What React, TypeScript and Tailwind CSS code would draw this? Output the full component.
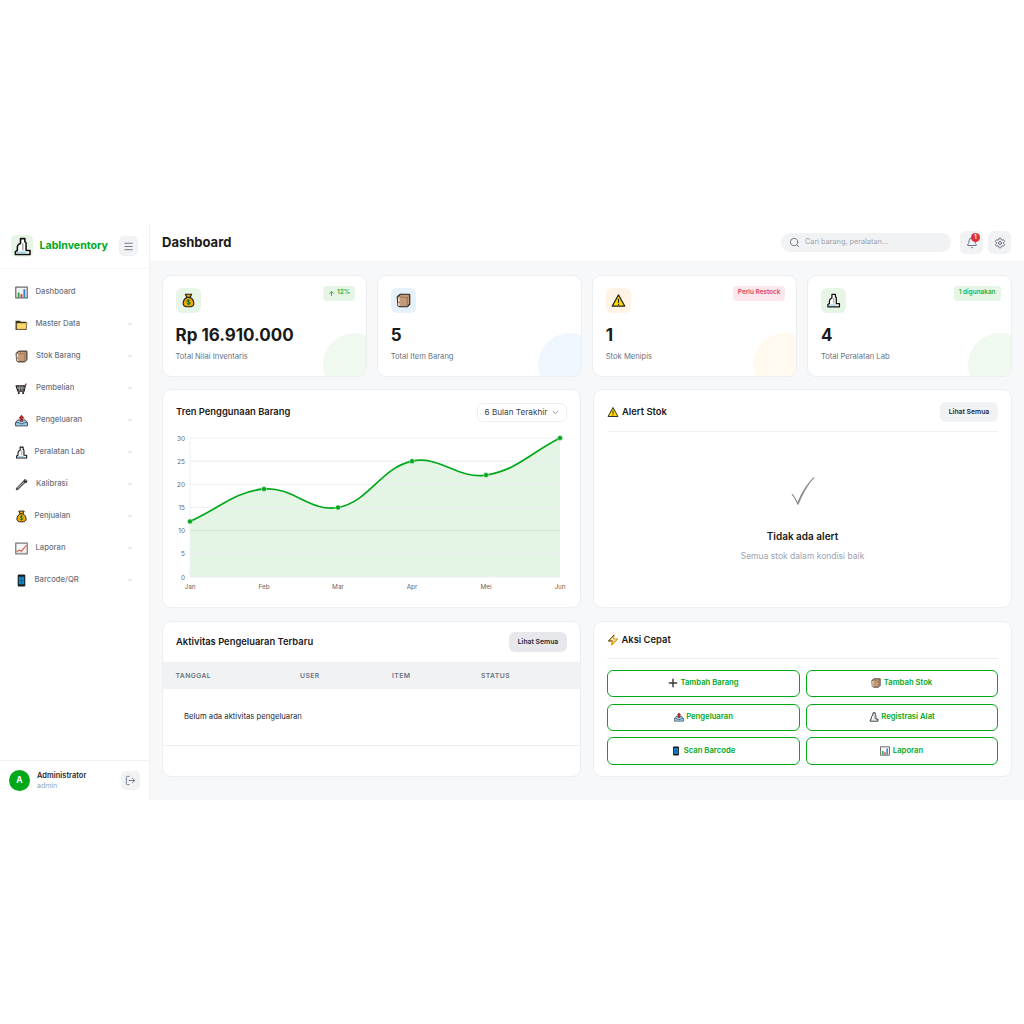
import React from "react";
import { Menu, ChevronDown, Search, Bell, Settings, LogOut, ArrowUp } from "lucide-react";

type IP = { s?: number };
const Svg = ({ s = 13, children }: { s?: number; children: React.ReactNode }) => (
  <svg width={s} height={s} viewBox="0 0 24 24" className="shrink-0">{children}</svg>
);
const Micro = ({ s }: IP) => (
  <Svg s={s}>
    <path d="M9.500 2h5.500v4l1.500 1.500V17H21.500v5H3v-3.500l2.500-1.500v-4c0-1.500 .5-2.500 1.500-3.500L9.500 8z" fill="#fff" stroke="#111" strokeWidth="2" strokeLinejoin="round" />
    <path d="M5 18.500h11v2H5z" fill="#8fd0e8" />
    <path d="M12.500 8v9" stroke="#555" strokeWidth="1" />
  </Svg>
);
const Bag = ({ s }: IP) => (
  <Svg s={s}>
    <path d="M7 2h10l-2.500 5c4 2 6 6 6 10 0 3-3 5-8.500 5S3.500 20 3.500 17c0-4 2-8 6-10z" fill="#f5a800" stroke="#222" strokeWidth="1.800" strokeLinejoin="round" />
    <path d="M9 7h6" stroke="#222" strokeWidth="1.800" />
    <path d="M14.500 12c-1-1.200-5-1.200-5 .8 0 2.400 5 1 5 3.400 0 2-4 2-5.200.6M12 9.500v10" fill="none" stroke="#0f7a2c" strokeWidth="1.700" />
  </Svg>
);
const Box = ({ s }: IP) => (
  <Svg s={s}>
    <path d="M2 6l5-4h15v16l-4 4H6l-3-2z" fill="#c49a78" stroke="#222" strokeWidth="1.800" strokeLinejoin="round" />
    <path d="M2.500 6l15.500 1.500V22" fill="none" stroke="#8b6a4c" strokeWidth="1.200" />
    <path d="M18 7.500L22 2" stroke="#8b6a4c" strokeWidth="1.200" />
    <path d="M3 7h3v14l-3-1z" fill="#ead8c4" />
    <circle cx="5" cy="15" r="1.300" fill="#e5484d" />
  </Svg>
);
const Warn = ({ s }: IP) => (
  <Svg s={s}>
    <path d="M12 3l10 18H2z" fill="#ffd800" stroke="#222" strokeWidth="1.800" strokeLinejoin="round" />
    <path d="M12 9v6.500M12 17v2" stroke="#222" strokeWidth="1.800" />
  </Svg>
);
const Folder = ({ s }: IP) => (
  <Svg s={s}>
    <path d="M1 5h8l2 2h10v15H1z" fill="#3a3426" />
    <path d="M3 9h19l-1.500 12H3z" fill="#ffd76a" stroke="#3a3426" strokeWidth="1" />
  </Svg>
);
const Cart = ({ s }: IP) => (
  <Svg s={s}>
    <path d="M19 6l2-3" stroke="#c0392b" strokeWidth="2.500" />
    <path d="M2 7h17l-2 10H5z" fill="#555" stroke="#222" strokeWidth="2" strokeLinejoin="round" />
    <path d="M3 11h15M8 7v10M13 7v10" stroke="#ccc" strokeWidth="1" />
    <circle cx="7" cy="20.500" r="2" fill="#222" />
    <circle cx="15" cy="20.500" r="2" fill="#222" />
  </Svg>
);
const Outbox = ({ s }: IP) => (
  <Svg s={s}>
    <path d="M1 16l4-5h14l4 5v6H1z" fill="#9fd0ee" stroke="#27323a" strokeWidth="1.500" strokeLinejoin="round" />
    <path d="M1 16h7l1 2h6l1-2h7" fill="none" stroke="#27323a" strokeWidth="1.200" />
    <path d="M12 2l5 6h-3v6h-4V8H7z" fill="#c81e1e" stroke="#4a1010" strokeWidth=".6" />
  </Svg>
);
const Wrench = ({ s }: IP) => (
  <Svg s={s}>
    <path d="M4 20L19 5" stroke="#222" strokeWidth="5" strokeLinecap="round" />
    <path d="M4 20L19 5" stroke="#a8a8a8" strokeWidth="2.500" strokeLinecap="round" />
    <path d="M17 1.500l1 3 2 1 3-1c0 3-1.500 5-4.500 5L16 7z" fill="#333" />
    <circle cx="4" cy="20" r="1" fill="#222" />
  </Svg>
);
const BarsChart = ({ s }: IP) => (
  <Svg s={s}>
    <rect x="1.500" y="2" width="21" height="20" fill="#f4f4f4" stroke="#444" strokeWidth="1.800" />
    <rect x="5" y="12" width="3.500" height="9" fill="#28a745" />
    <rect x="10.200" y="15" width="3.500" height="6" fill="#d9413a" />
    <rect x="15.500" y="6" width="3.500" height="15" fill="#2f80d8" />
  </Svg>
);
const LineChart2 = ({ s }: IP) => (
  <Svg s={s}>
    <rect x="1.500" y="2" width="21" height="20" fill="#f7f7f7" stroke="#555" strokeWidth="1.800" />
    <path d="M3 18l5-3 4 2 9-11" fill="none" stroke="#e0523f" strokeWidth="2" />
    <path d="M2 20h20" stroke="#bbb" strokeWidth="1" />
  </Svg>
);
const Phone = ({ s }: IP) => (
  <Svg s={s}>
    <rect x="5" y="1" width="14" height="22" rx="2" fill="#1c1c1c" />
    <rect x="7" y="5" width="10" height="14" fill="#1787c9" />
    <path d="M12 5v14M7 12h10" stroke="#0b4f78" strokeWidth="1" />
  </Svg>
);
const Plus = ({ s }: IP) => (
  <Svg s={s}>
    <path d="M12 2v20M2 12h20" stroke="#3a3a3a" strokeWidth="3.500" />
  </Svg>
);
const Zap = ({ s }: IP) => (
  <Svg s={s}>
    <path d="M14 2L3 14h8l-2 8 12-12h-8z" fill="#fff5d6" stroke="#e59a00" strokeWidth="2.200" strokeLinejoin="round" />
    <path d="M14 2L3 14h8" fill="none" stroke="#222" strokeWidth="1.400" />
  </Svg>
);

const nav: [string, (p: IP) => React.ReactElement, string][] = [
  ["Dashboard", BarsChart, "w-[20.500px]"],
  ["Master Data", Folder, "w-[20.500px]"],
  ["Stok Barang", Box, "w-[21px]"],
  ["Pembelian", Cart, "w-[21px]"],
  ["Pengeluaran", Outbox, "w-[21px]"],
  ["Peralatan Lab", Micro, "w-[19.500px]"],
  ["Kalibrasi", Wrench, "w-[21px]"],
  ["Penjualan", Bag, "w-[19.500px]"],
  ["Laporan", LineChart2, "w-[20.500px]"],
  ["Barcode/QR", Phone, "w-[19.500px]"],
];

const Sidebar = () => (
  <aside className="w-[150px] shrink-0 h-full bg-white border-r border-[#f0f1f3] flex flex-col">
    <div className="h-[45px] shrink-0 flex items-center pl-[11px] pr-[11px] border-b border-[#f5f6f7]">
      <div className="w-[22px] h-[22px] rounded-[5px] bg-[#e6f5e6] flex items-center justify-center">
        <Micro s={19} />
      </div>
      <span className="ml-[6.500px] text-[10.600px] font-bold text-[#00a81a] leading-none">LabInventory</span>
      <button className="ml-auto w-[19px] h-[19.500px] rounded-[5px] bg-[#f1f2f4] flex items-center justify-center text-[#6b7280]">
        <Menu size={11} />
      </button>
    </div>
    <nav className="flex flex-col pt-[7px]">
      {nav.map(([label, I, w], i) => (
        <div key={label} className="h-[32px] flex items-center pl-[15px] pr-[16px]">
          <div className={w + " shrink-0"}><I s={13} /></div>
          <span className="text-[7.700px] font-medium text-[#6b7280]">{label}</span>
          {i > 0 && <ChevronDown size={6} className="ml-auto text-[#9ca3af]" />}
        </div>
      ))}
    </nav>
    <div className="mt-auto h-[40px] border-t border-[#f0f1f3] flex items-center pl-[9px] pr-[9px]">
      <div className="w-[21px] h-[21px] rounded-full bg-[#00a81a] text-white text-[8.500px] font-bold flex items-center justify-center">A</div>
      <div className="ml-[7px] flex flex-col gap-[3px]">
        <span className="text-[7.500px] font-semibold text-[#1f2937] leading-none">Administrator</span>
        <span className="text-[7px] text-[#9ca3af] leading-none">admin</span>
      </div>
      <button className="ml-auto w-[19px] h-[19px] rounded-[5px] bg-[#f1f2f4] flex items-center justify-center text-[#6b7280]">
        <LogOut size={11} />
      </button>
    </div>
  </aside>
);

const Header = () => (
  <header className="h-[38px] shrink-0 bg-white border-b border-[#f0f1f3] flex items-center pl-[12px] pr-[13px]">
    <h1 className="text-[13px] font-bold text-[#1a1a1a] leading-none">Dashboard</h1>
    <div className="ml-auto w-[170px] h-[19.500px] rounded-full bg-[#f1f2f4] flex items-center pl-[8px]">
      <Search size={11} className="text-[#6b7280]" />
      <span className="ml-[5px] text-[7.300px] text-[#9ca3af]">Cari barang, peralatan...</span>
    </div>
    <button className="relative ml-[9px] w-[23px] h-[23px] rounded-[6px] bg-[#f1f2f4] flex items-center justify-center text-[#6b7280]">
      <Bell size={12} />
      <span className="absolute top-[2px] right-[3px] w-[9px] h-[9px] rounded-full bg-[#dc2f3e] text-white text-[5.500px] font-bold flex items-center justify-center leading-none">1</span>
    </button>
    <button className="ml-[5px] w-[23px] h-[23px] rounded-[6px] bg-[#f1f2f4] flex items-center justify-center text-[#6b7280]">
      <Settings size={12} />
    </button>
  </header>
);

type StatP = {
  icon: (p: IP) => React.ReactElement; iconBg: string; circle: string; value: string; label: string;
  badge?: React.ReactNode; badgeCls?: string;
};
const Stat = ({ icon: I, iconBg, circle, value, label, badge, badgeCls }: StatP) => (
  <div className="relative min-w-0 h-[102.500px] bg-white rounded-[9px] border border-[#eceef1] overflow-hidden pl-[12.500px] pt-[12px]">
    <div className={"w-[25.500px] h-[25.500px] rounded-[6px] flex items-center justify-center " + iconBg}><I s={15} /></div>
    {badge && (
      <div className={"absolute top-[10px] right-[10.500px] h-[15px] px-[5px] rounded-[4px] text-[6.400px] font-semibold flex items-center gap-[2px] " + badgeCls}>{badge}</div>
    )}
    <div className="mt-[11px] text-[17px] font-bold text-[#1a1a1a] leading-[22px]">{value}</div>
    <div className="mt-[5px] text-[7.600px] text-[#6b7280] leading-[12px]">{label}</div>
    <div className={"absolute right-[-21px] bottom-[-21px] w-[64px] h-[64px] rounded-full " + circle} />
  </div>
);

const Chart = () => {
  const L = 190 - 176, T = 438 - 432;
  const W = 370, H = 139;
  const vals = [12, 19, 15, 25, 22, 30];
  const pts = vals.map((v, i) => ({ x: L + (W * i) / 5, y: T + H - (H * v) / 30 }));
  let d = `M${pts[0].x} ${pts[0].y}`;
  const t = 0.4;
  const cp = pts.map((p, i) => {
    const a = pts[Math.max(i - 1, 0)], b = pts[Math.min(i + 1, 5)];
    const d1 = Math.hypot(p.x - a.x, p.y - a.y), d2 = Math.hypot(b.x - p.x, b.y - p.y);
    const s = d1 + d2;
    return {
      px: p.x - (t * d1 / s) * (b.x - a.x), py: p.y - (t * d1 / s) * (b.y - a.y),
      nx: p.x + (t * d2 / s) * (b.x - a.x), ny: p.y + (t * d2 / s) * (b.y - a.y),
    };
  });
  for (let i = 1; i < 6; i++) d += ` C${cp[i - 1].nx} ${cp[i - 1].ny} ${cp[i].px} ${cp[i].py} ${pts[i].x} ${pts[i].y}`;
  const months = ["Jan", "Feb", "Mar", "Apr", "Mei", "Jun"];
  return (
    <svg width={394} height={166} viewBox="0 0 394 166" className="block">
      <path d={`${d} L${L + W} ${T + H} L${L} ${T + H} Z`} fill="#e4f4e5" />
      {[0, 5, 10, 15, 20, 25, 30].map((v) => {
        const y = T + H - (H * v) / 30;
        return (
          <g key={v}>
            <line x1={L} x2={L + W} y1={y} y2={y} stroke={v === 10 ? "#d3e3d5" : v === 25 ? "#e9ebee" : "#eef0f2"} strokeWidth="1" />
            <text x={L - 5} y={y + 2.500} textAnchor="end" fontSize="6.400" fill="#666" fontFamily="Inter">{v}</text>
          </g>
        );
      })}
      <line x1={L} x2={L} y1={T} y2={T + H} stroke="#eef0f2" />
      {months.map((m, i) => (
        <text key={m} x={L + (W * i) / 5} y={T + H + 12} textAnchor="middle" fontSize="6.400" fill="#666" fontFamily="Inter">{m}</text>
      ))}
      <path d={d} fill="none" stroke="#00a81a" strokeWidth="1.700" />
      {pts.map((p, i) => <circle key={i} cx={p.x} cy={p.y} r="2.500" fill="#00a81a" stroke="#e9f6ea" strokeWidth=".5" />)}
    </svg>
  );
};

const Quick = ({ I, label, h }: { I: (p: IP) => React.ReactElement; label: string; h: string }) => (
  <button className={"border-[1.300px] border-[#00a81a] rounded-[6px] bg-white flex items-center justify-center gap-[2.500px] text-[#00a81a] text-[7.700px] font-semibold " + h}>
    <I s={10} />
    <span>{label}</span>
  </button>
);

export default function App() {
  return (
    <div className="min-h-screen bg-white flex items-center font-['Inter',sans-serif]">
      <div className="w-[1024px] h-[576px] flex bg-[#f7f8fa]">
        <Sidebar />
        <div className="flex-1 min-w-0 flex flex-col">
          <Header />
          <main className="flex-1 flex flex-col pl-[12px] pr-[12px] pt-[12.500px]">
            <div className="grid grid-cols-4 gap-[10.500px]">
              <Stat icon={Bag} iconBg="bg-[#e6f5e6]" circle="bg-[#f0f9f0]" value="Rp 16.910.000" label="Total Nilai Inventaris"
                badge={<><ArrowUp size={7} strokeWidth={3} />12%</>} badgeCls="bg-[#e6f5e6] text-[#22b03c]" />
              <Stat icon={Box} iconBg="bg-[#e6f1fb]" circle="bg-[#f0f6fd]" value="5" label="Total Item Barang" />
              <Stat icon={Warn} iconBg="bg-[#fff3e6]" circle="bg-[#fff9f0]" value="1" label="Stok Menipis"
                badge="Perlu Restock" badgeCls="bg-[#fce8ec] text-[#e2445c]" />
              <Stat icon={Micro} iconBg="bg-[#e6f5e6]" circle="bg-[#f0f9f0]" value="4" label="Total Peralatan Lab"
                badge="1 digunakan" badgeCls="bg-[#e6f5e6] text-[#22b03c]" />
            </div>

            <div className="grid grid-cols-2 gap-[12px] mt-[12px]">
              <section className="min-w-0 h-[219px] bg-white rounded-[9px] border border-[#eceef1] overflow-hidden">
                <div className="h-[42px] pt-[3px] flex items-center pl-[13px] pr-[13px]">
                  <h3 className="text-[9.400px] font-semibold text-[#1a1a1a]">Tren Penggunaan Barang</h3>
                  <div className="ml-auto w-[90px] h-[19.500px] rounded-[6px] border border-[#eceef1] flex items-center pl-[6.500px] text-[8.200px] text-[#374151]">
                    6 Bulan Terakhir
                    <ChevronDown size={9} className="ml-auto mr-[6px] text-[#6b7280]" />
                  </div>
                </div>
                <div className="pl-[13px]"><Chart /></div>
              </section>
              <section className="min-w-0 h-[219px] bg-white rounded-[9px] border border-[#eceef1] overflow-hidden flex flex-col px-[13px]">
                <div className="h-[42px] shrink-0 pt-[3px] flex items-center border-b border-[#eef0f2]">
                  <Warn s={12} />
                  <h3 className="ml-[3px] text-[9.400px] font-semibold text-[#1a1a1a]">Alert Stok</h3>
                  <button className="ml-auto w-[58px] h-[19.500px] rounded-[6px] bg-[#f1f2f4] text-[6.800px] font-semibold text-[#1f2937]">Lihat Semua</button>
                </div>
                <div className="flex flex-col items-center pt-[44px]">
                  <svg width="26" height="30" viewBox="0 0 26 30">
                    <path d="M2 18c2 2 4 6 5.500 9.500C11 18 17 8 24 1.500 17 9 12 19 8 28.500 6 24 4 21 2 18z" fill="#808080" stroke="#808080" strokeWidth=".8" strokeLinejoin="round" />
                  </svg>
                  <div className="mt-[23px] text-[10px] font-semibold text-[#1a1a1a] leading-[14px]">Tidak ada alert</div>
                  <div className="mt-[7px] text-[8.500px] text-[#9ca3af] leading-[12px]">Semua stok dalam kondisi baik</div>
                </div>
              </section>
            </div>

            <div className="grid grid-cols-2 gap-[12px] mt-[13px]">
              <section className="min-w-0 h-[156px] bg-white rounded-[9px] border border-[#eceef1] overflow-hidden">
                <div className="h-[40px] flex items-center px-[13px]">
                  <h3 className="text-[9.400px] font-semibold text-[#1a1a1a]">Aktivitas Pengeluaran Terbaru</h3>
                  <button className="ml-auto w-[58px] h-[20px] rounded-[6px] bg-[#e7e8eb] text-[6.800px] font-semibold text-[#1f2937]">Lihat Semua</button>
                </div>
                <table className="w-full border-collapse table-fixed">
                  <thead>
                    <tr className="h-[26.500px] bg-[#f1f2f4] text-[6.800px] text-[#6b7280] tracking-[0.400px] text-left border-t border-[#eef0f2]">
                      <th className="w-[137px] pl-[12.500px] font-semibold">TANGGAL</th>
                      <th className="w-[92px] font-semibold">USER</th>
                      <th className="w-[89px] font-semibold">ITEM</th>
                      <th className="font-semibold">STATUS</th>
                    </tr>
                  </thead>
                  <tbody>
                    <tr className="h-[56px] border-b border-[#eceef1]">
                      <td colSpan={4} className="pl-[21px] text-[7.700px] text-[#1f2937]">Belum ada aktivitas pengeluaran</td>
                    </tr>
                  </tbody>
                </table>
              </section>
              <section className="min-w-0 h-[156px] bg-white rounded-[9px] border border-[#eceef1] overflow-hidden px-[13px]">
                <div className="h-[37px] flex items-center border-b border-[#eceef1]">
                  <Zap s={12} />
                  <h3 className="ml-[2.500px] text-[9.400px] font-semibold text-[#1a1a1a]">Aksi Cepat</h3>
                </div>
                <div className="grid grid-cols-2 gap-x-[6px] gap-y-[6.500px] mt-[10.500px]">
                  <Quick I={Plus} label="Tambah Barang" h="h-[27.500px]" />
                  <Quick I={Box} label="Tambah Stok" h="h-[27.500px]" />
                  <Quick I={Outbox} label="Pengeluaran" h="h-[27px]" />
                  <Quick I={Micro} label="Registrasi Alat" h="h-[27px]" />
                  <Quick I={Phone} label="Scan Barcode" h="h-[27.500px]" />
                  <Quick I={BarsChart} label="Laporan" h="h-[27.500px]" />
                </div>
              </section>
            </div>
          </main>
        </div>
      </div>
    </div>
  );
}
